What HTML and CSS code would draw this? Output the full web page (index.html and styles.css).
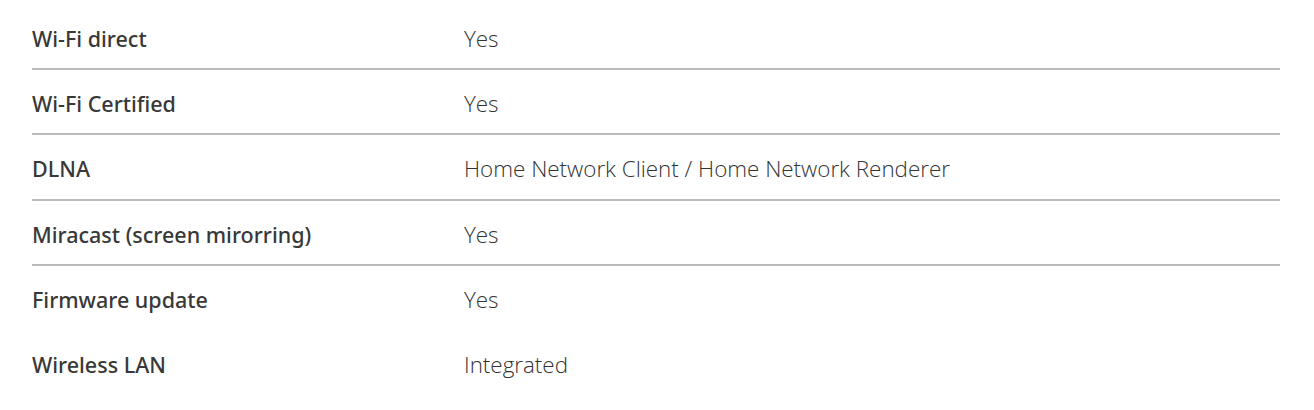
FILE: index.html
```html
<!DOCTYPE html>
<html lang="en">
<head>
<meta charset="utf-8">
<title>Specs</title>
<link rel="stylesheet" href="styles.css">
</head>
<body>
<div class="specs">
  <div class="row"><div class="label">Wi-Fi direct</div><div class="value">Yes</div></div>
  <div class="row"><div class="label">Wi-Fi Certified</div><div class="value">Yes</div></div>
  <div class="row"><div class="label">DLNA</div><div class="value">Home Network Client / Home Network Renderer</div></div>
  <div class="row"><div class="label">Miracast (screen mirorring)</div><div class="value">Yes</div></div>
  <div class="row plain"><div class="label">Firmware update</div><div class="value">Yes</div></div>
  <div class="row plain"><div class="label">Wireless LAN</div><div class="value">Integrated</div></div>
</div>
</body>
</html>
```

FILE: styles.css
```css
html, body {
  margin: 0;
  padding: 0;
  background: #fff;
}
body {
  font-family: "Open Sans", "Noto Sans", sans-serif;
  color: #333;
}
.specs {
  padding: 4.67px 34px 0 32px;
}
.row {
  display: grid;
  grid-template-columns: 432px 1fr;
  align-items: center;
  box-sizing: border-box;
  height: 65.33px;
  padding-top: 4px;
  border-bottom: 2px solid #bbb;
}
.row.plain {
  border-bottom-color: transparent;
}
.label {
  font-family: "Noto Sans", "Open Sans", sans-serif;
  font-size: 21.5px;
  font-weight: 500;
  color: #383838;
  letter-spacing: 0;
}
.value {
  font-size: 22.4px;
  font-weight: 300;
  color: #333;
}
```
